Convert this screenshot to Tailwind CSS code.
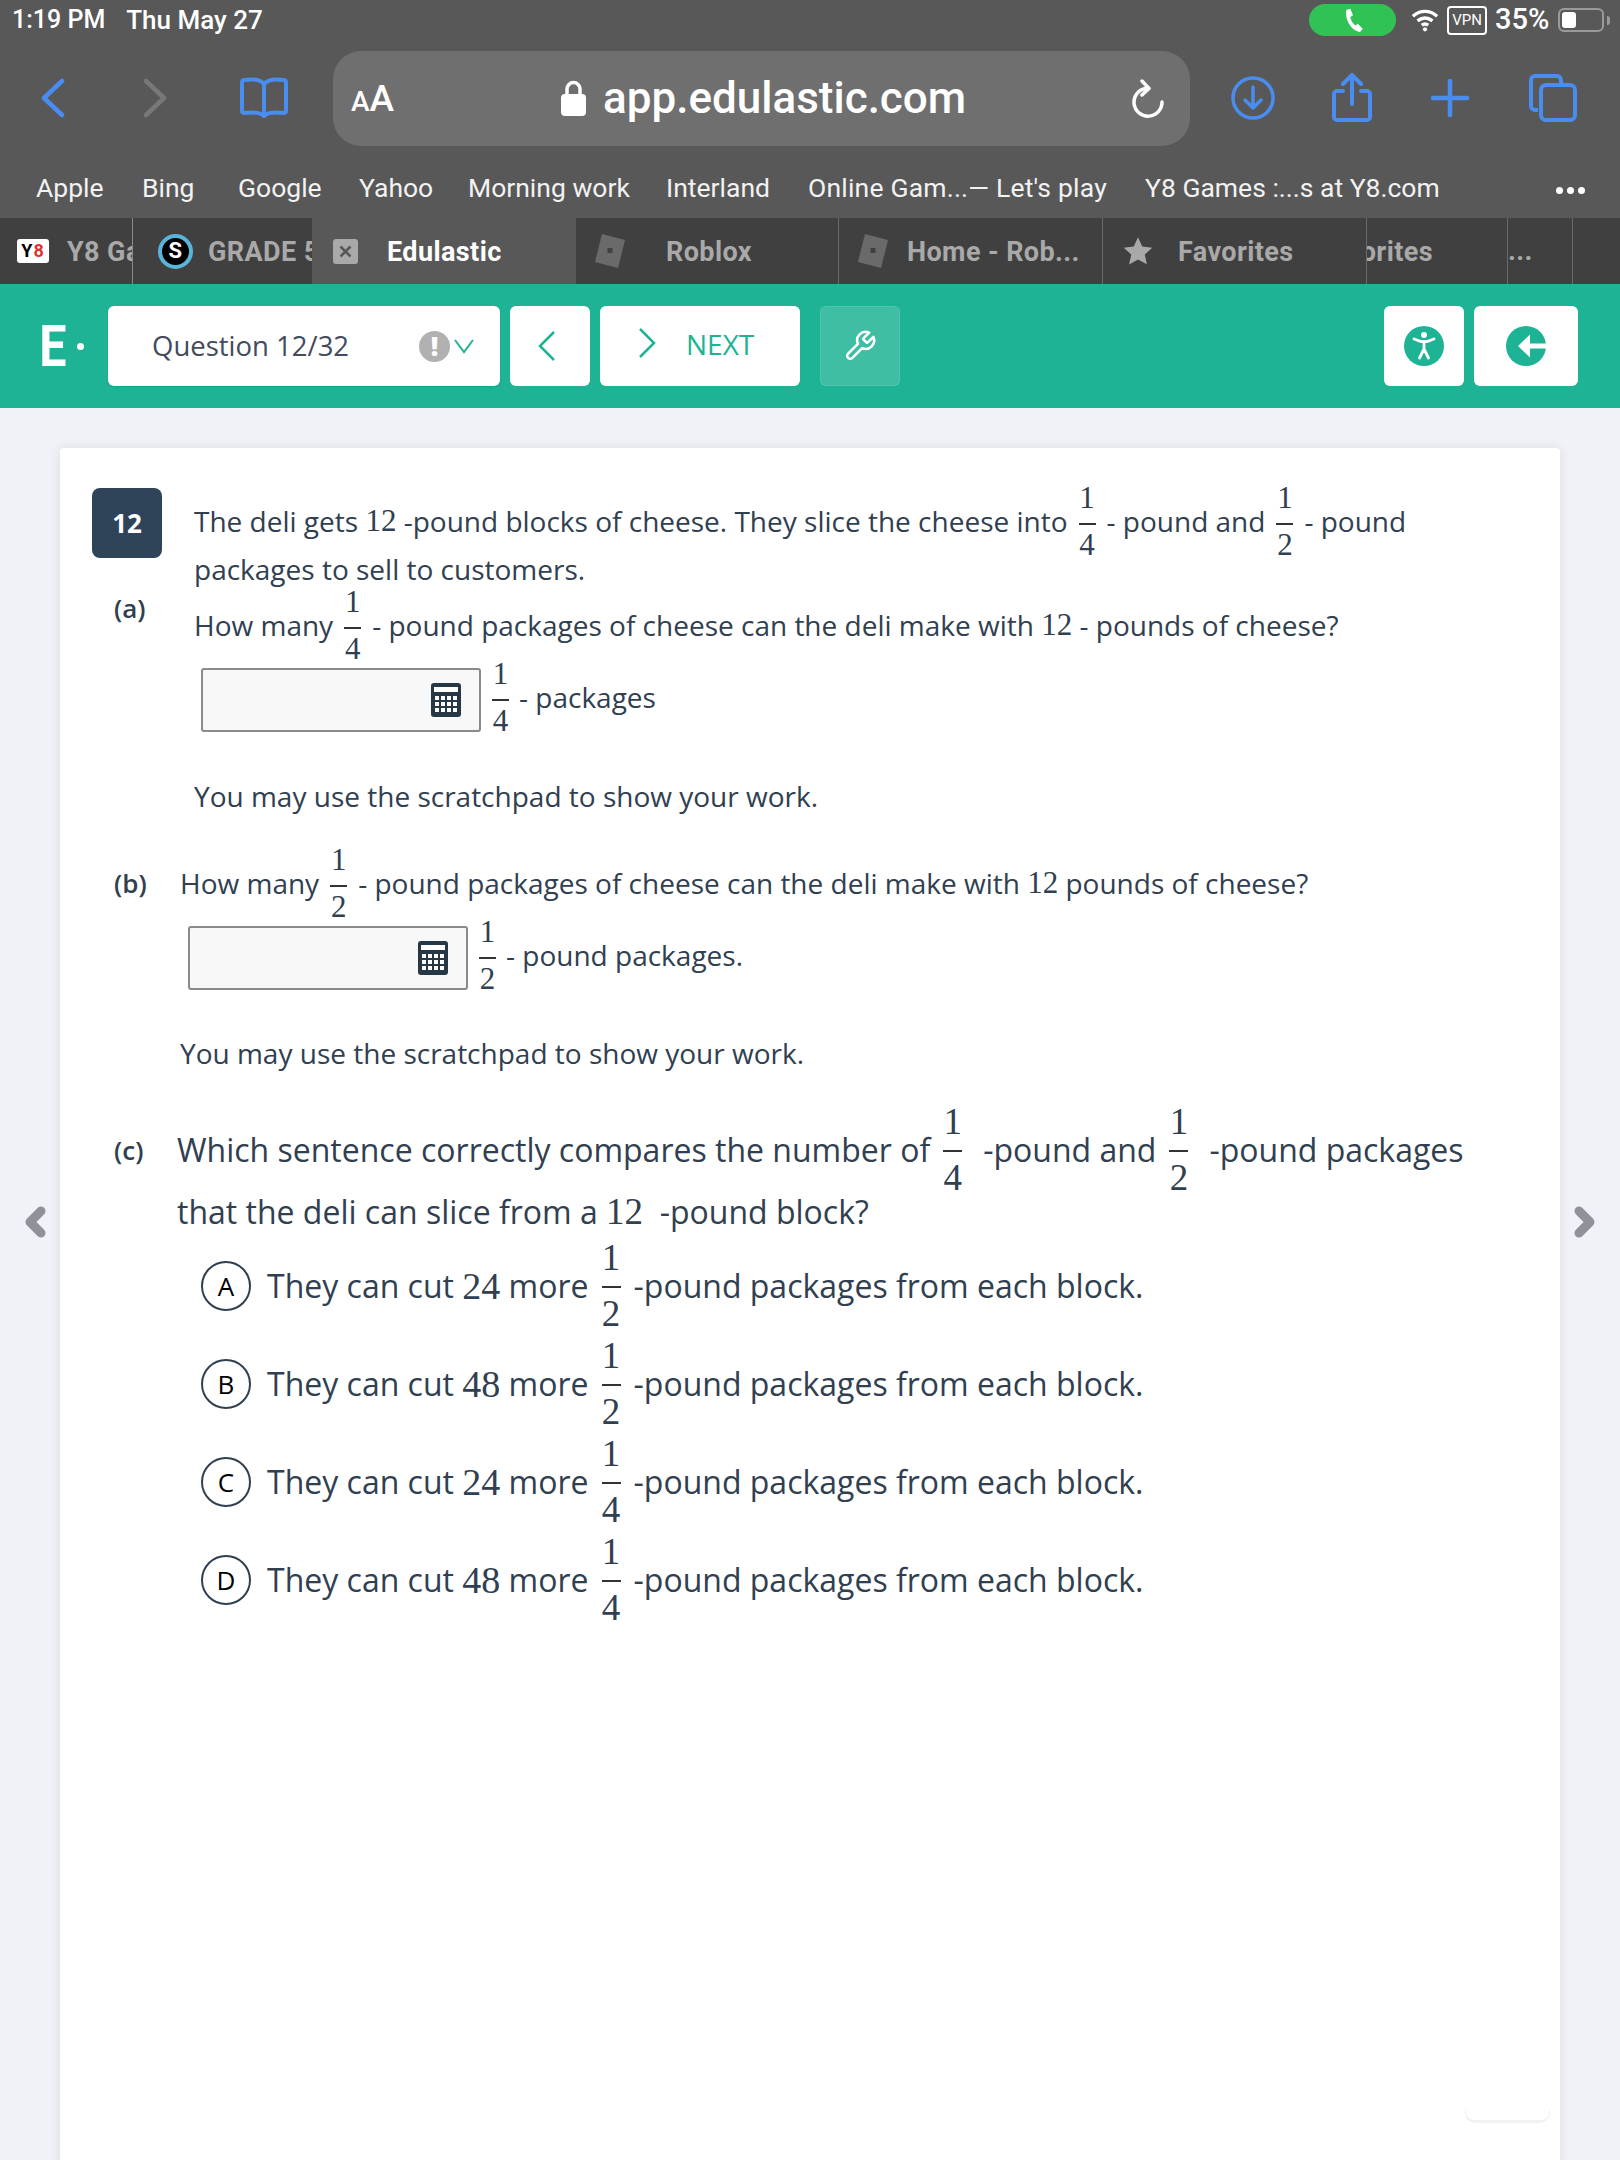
<!DOCTYPE html>
<html lang="en">
<head>
  <meta charset="UTF-8">
  <title>Edulastic</title>
  <script src="https://cdn.jsdelivr.net/npm/@tailwindcss/browser@4"></script>
</head>
<body class="bg-[#f1f2f7] font-['Open_Sans',sans-serif] text-[#304050]">
<div class="w-[1620px] h-[2160px] overflow-hidden relative">

  <!-- Safari status + toolbar -->
  <div class="bg-[#585858] font-['Roboto',sans-serif] text-white">
    <div class="h-[40px] flex items-center pl-[12px] pr-[10px] font-medium">
      <span class="text-[25px]">1:19 PM</span>
      <span class="ml-[21px] text-[26px]">Thu May 27</span>
      <div class="ml-auto flex items-center">
        <div class="w-[87px] h-[32px] rounded-full bg-[#30c254] flex items-center justify-center">
          <svg class="w-[26px] h-[26px]" viewBox="0 0 24 24" fill="#fff"><path d="M6 2.500 9.500 1.500 12 7.500 9.500 9.500C10 12 11.500 15 14 17L16.500 15.500 21 20 18.500 23C11 22 4 12 6 2.500Z"/></svg>
        </div>
        <svg class="w-[28px] h-[30px] ml-[15px]" viewBox="0 0 30 30" fill="none" stroke="#fff" stroke-width="3.600"><path d="M2 11c8-7 18-7 26 0M7 16c5-4 11-4 16 0M11.500 20.500c2-1.500 5-1.500 7 0"/><circle cx="15" cy="25" r="2.200" fill="#fff" stroke="none"/></svg>
        <div class="ml-[8px] w-[40px] h-[29px] border-[2px] border-white rounded-[4px] text-[15px] font-normal leading-none flex items-center justify-center">VPN</div>
        <span class="ml-[8px] w-[58px] text-[29px]">35%</span>
        <div class="ml-[5px] w-[46px] h-[24px] border-[2px] border-[#9a9a9a] rounded-[6px] p-[2px]"><div class="w-[14px] h-full bg-white rounded-[3px]"></div></div>
        <div class="ml-[3px] w-[3px] h-[9px] bg-[#9a9a9a] rounded-r"></div>
      </div>
    </div>

    <div class="h-[120px] pb-[4px] flex items-center relative">
      <svg class="w-[24px] h-[40px] ml-[41px]" viewBox="0 0 24 40" fill="none" stroke="#4a8df0" stroke-width="4.500" stroke-linecap="round" stroke-linejoin="round"><path d="M21 3 3 20l18 17"/></svg>
      <svg class="w-[24px] h-[40px] ml-[78px]" viewBox="0 0 24 40" fill="none" stroke="#787878" stroke-width="4.500" stroke-linecap="round" stroke-linejoin="round"><path d="M3 3l18 17L3 37"/></svg>
      <svg class="w-[50px] h-[42px] ml-[72px]" viewBox="0 0 50 42" fill="none" stroke="#4a8df0" stroke-width="4" stroke-linejoin="round" stroke-linecap="round"><path d="M25 7C21 2 12 2 5 3 3 3 3 5 3 6v28c0 2 1 2 3 2 8-1 15-1 19 3 4-4 11-4 19-3 2 0 3 0 3-2V6c0-1 0-3-2-3-7-1-16-1-20 4ZM25 7v32"/></svg>
      <div class="ml-[44px] w-[857px] h-[95px] rounded-[28px] bg-[#6f6f6f] flex items-center relative">
        <span class="ml-[18px] font-medium leading-none"><span class="text-[28px]">A</span><span class="text-[37px]">A</span></span>
        <div class="absolute left-[228px] top-[25px] flex items-center">
          <svg class="w-[25px] h-[36px]" viewBox="0 0 25 36"><path d="M6 15V9a6.500 6.500 0 0 1 13 0v6" fill="none" stroke="#fff" stroke-width="3.500"/><rect x="0" y="14" width="25" height="22" rx="4" fill="#fff"/></svg>
          <span class="ml-[17px] text-[44px] font-medium leading-none">app.edulastic.com</span>
        </div>
        <svg class="absolute left-[798px] top-[28px] w-[34px] h-[40px]" viewBox="0 0 34 40" fill="none" stroke="#fff" stroke-width="3.500" stroke-linecap="round" stroke-linejoin="round"><path d="M14 9.500a14 14 0 1 0 17 13.500"/><path d="M11 2l7 7.500-7 6.500"/></svg>
      </div>
      <svg class="w-[44px] h-[44px] ml-[41px]" viewBox="0 0 44 44" fill="none" stroke="#4a8df0" stroke-width="3.500" stroke-linecap="round" stroke-linejoin="round"><circle cx="22" cy="22" r="20"/><path d="M22 11v21M14 24l8 8 8-8"/></svg>
      <svg class="w-[42px] h-[50px] ml-[56px]" viewBox="0 0 42 50" fill="none" stroke="#4a8df0" stroke-width="4" stroke-linecap="round" stroke-linejoin="round"><path d="M12 18H6a3 3 0 0 0-3 3v23a3 3 0 0 0 3 3h30a3 3 0 0 0 3-3V21a3 3 0 0 0-3-3h-6M21 31V3M12 11l9-9 9 9"/></svg>
      <svg class="w-[38px] h-[38px] ml-[58px]" viewBox="0 0 38 38" fill="none" stroke="#4a8df0" stroke-width="4.500" stroke-linecap="round"><path d="M19 2v34M2 19h34"/></svg>
      <svg class="w-[48px] h-[48px] ml-[60px]" viewBox="0 0 48 48" fill="none" stroke="#4a8df0" stroke-width="4" stroke-linejoin="round"><path d="M9 36H6a4 4 0 0 1-4-4V6a4 4 0 0 1 4-4h22a4 4 0 0 1 4 4v5"/><rect x="12" y="11" width="34" height="35" rx="5"/></svg>
    </div>

    <!-- Bookmarks -->
    <div class="h-[58px] relative text-[26.500px] text-[#f2f2f2]">
      <span class="absolute left-[36px] top-[8px]">Apple</span>
      <span class="absolute left-[142px] top-[8px]">Bing</span>
      <span class="absolute left-[238px] top-[8px]">Google</span>
      <span class="absolute left-[359px] top-[8px]">Yahoo</span>
      <span class="absolute left-[468px] top-[8px]">Morning work</span>
      <span class="absolute left-[666px] top-[8px]">Interland</span>
      <span class="absolute left-[808px] top-[8px] tracking-[0.2px]">Online Gam...— Let's play</span>
      <span class="absolute left-[1145px] top-[8px]">Y8 Games :...s at Y8.com</span>
      <div class="absolute left-[1556px] top-[27px] flex gap-[4px]">
        <span class="w-[7px] h-[7px] rounded-full bg-white"></span><span class="w-[7px] h-[7px] rounded-full bg-white"></span><span class="w-[7px] h-[7px] rounded-full bg-white"></span>
      </div>
    </div>
  </div>

  <!-- Tabs -->
  <div class="h-[66px] bg-[#404040] flex font-['Roboto',sans-serif] font-bold text-[27px] tracking-[0.4px] text-[#a9a9a9]">
    <div class="w-[133px] border-r border-[#8a8a8a] flex items-center overflow-hidden pl-[17px] shrink-0">
      <div class="w-[32px] h-[24px] shrink-0 bg-white rounded-[3px] flex items-center justify-center text-[18px] leading-none text-black tracking-[1px]">Y<span class="text-[#e03030]">8</span></div>
      <span class="ml-[18px] pt-[2px] whitespace-nowrap">Y8 Games</span>
    </div>
    <div class="w-[179px] flex items-center overflow-hidden pl-[25px] shrink-0">
      <div class="w-[35px] h-[35px] shrink-0 rounded-full bg-black border-[4px] border-[#5ab4d8] flex items-center justify-center text-[22px] text-white leading-none">S</div>
      <span class="ml-[15px] pt-[2px] whitespace-nowrap">GRADE 5</span>
    </div>
    <div class="w-[264px] bg-[#585858] flex items-center pl-[21px] text-white shrink-0">
      <svg class="w-[25px] h-[25px]" viewBox="0 0 25 25"><rect width="25" height="25" rx="3" fill="#a9a9a9"/><path d="M7.500 7.500l10 10M17.500 7.500l-10 10" stroke="#585858" stroke-width="2.500"/></svg>
      <span class="ml-[29px] pt-[2px]">Edulastic</span>
    </div>
    <div class="w-[263px] border-r border-[#6a6a6a] flex items-center pl-[18px] shrink-0">
      <svg class="w-[32px] h-[36px]" viewBox="0 0 32 36"><path d="M8 1 31 7 24 35 1 29Z" fill="#6a6a6a"/><rect x="13.500" y="15" width="5" height="5" fill="#404040"/></svg>
      <span class="ml-[40px] pt-[2px]">Roblox</span>
    </div>
    <div class="w-[264px] border-r border-[#6a6a6a] flex items-center pl-[18px] shrink-0">
      <svg class="w-[32px] h-[36px]" viewBox="0 0 32 36"><path d="M8 1 31 7 24 35 1 29Z" fill="#6a6a6a"/><rect x="13.500" y="15" width="5" height="5" fill="#404040"/></svg>
      <span class="ml-[18px] pt-[2px] whitespace-nowrap">Home - Rob...</span>
    </div>
    <div class="w-[264px] border-r border-[#6a6a6a] flex items-center pl-[20px] shrink-0">
      <svg class="w-[30px] h-[30px]" viewBox="0 0 24 24" fill="#a9a9a9"><path d="M12 1l3.400 7.400 8 .9-6 5.400 1.700 8L12 18.700 4.900 22.700l1.700-8-6-5.400 8-.9Z"/></svg>
      <span class="ml-[25px] pt-[2px]">Favorites</span>
    </div>
    <div class="w-[141px] border-r border-[#6a6a6a] flex items-center justify-end overflow-hidden shrink-0">
      <span class="whitespace-nowrap mr-[74px] pt-[2px]">Favorites</span>
    </div>
    <div class="w-[65px] border-r border-[#6a6a6a] flex items-center shrink-0"><span>...</span></div>
  </div>

  <!-- Edulastic header -->
  <div class="h-[124px] bg-[#1eb394] flex items-center relative">
    <span class="ml-[37px] w-[30px] text-white text-[57px] font-bold leading-none font-['Roboto',sans-serif] scale-x-[0.85]">E</span>
    <span class="ml-[10px] w-[7px] h-[7px] rounded-full bg-white"></span>
    <div class="ml-[24px] w-[392px] h-[80px] bg-white rounded-[6px] shadow-[0_1px_2px_rgba(0,0,0,0.12)] flex items-center pl-[44px] text-[27.500px] text-[#434b5d]">
      <span>Question 12/32</span>
      <span class="ml-[70px] w-[31px] h-[31px] rounded-full bg-[#b1b1b1] text-white text-[26px] font-extrabold flex items-center justify-center leading-none">!</span>
      <svg class="ml-[3px] w-[22px] h-[16px]" viewBox="0 0 22 16" fill="none" stroke="#1eb394" stroke-width="2"><path d="M2 2l9 12 9-12"/></svg>
    </div>
    <div class="ml-[10px] w-[80px] h-[80px] bg-white rounded-[6px] flex items-center justify-center">
      <svg class="w-[18px] h-[32px] mr-[8px]" viewBox="0 0 18 32" fill="none" stroke="#1eb394" stroke-width="2.500"><path d="M17 2 3 16l14 14"/></svg>
    </div>
    <div class="ml-[10px] w-[200px] h-[80px] bg-white rounded-[6px] flex items-center pl-[39px] text-[28px] text-[#1eb394]">
      <svg class="w-[18px] h-[32px] mb-[6px]" viewBox="0 0 18 32" fill="none" stroke="#1eb394" stroke-width="2.500"><path d="M1 2l14 14L1 30"/></svg>
      <span class="ml-[29px] mb-[4px]">NEXT</span>
    </div>
    <div class="ml-[20px] w-[80px] h-[80px] bg-white/15 rounded-[6px] border border-white/10 flex items-center justify-center">
      <svg class="w-[34px] h-[34px]" viewBox="0 0 24 24" fill="none" stroke="#fff" stroke-width="1.800" stroke-linejoin="round" stroke-linecap="round"><path d="M14.700 6.300a1 1 0 0 0 0 1.400l1.600 1.600a1 1 0 0 0 1.400 0l3.770-3.770a6 6 0 0 1-7.940 7.940l-6.910 6.910a2.120 2.120 0 0 1-3-3l6.910-6.910a6 6 0 0 1 7.940-7.940l-3.760 3.760z"/></svg>
    </div>
    <div class="ml-auto w-[80px] h-[80px] bg-white rounded-[6px] flex items-center justify-center">
      <svg class="w-[40px] h-[40px]" viewBox="0 0 40 40"><circle cx="20" cy="20" r="20" fill="#1eb394"/><circle cx="20" cy="9" r="3" fill="#fff"/><path d="M10 13l7 2.500h6l7-2.500M20 16v7M20 23l-4.500 9M20 23l4.500 9" fill="none" stroke="#fff" stroke-width="2.800" stroke-linecap="round"/></svg>
    </div>
    <div class="ml-[10px] mr-[42px] w-[104px] h-[80px] bg-white rounded-[6px] flex items-center justify-center">
      <svg class="w-[40px] h-[40px]" viewBox="0 0 40 40"><circle cx="20" cy="20" r="20" fill="#1eb394"/><path d="M40 17.500v5H24v9L12 20l12-11.500v9Z" fill="#fff"/></svg>
    </div>
  </div>

  <!-- Side arrows -->
  <svg class="absolute left-[24px] top-[1206px] w-[22px] h-[32px]" viewBox="0 0 22 32" fill="none" stroke="#8f9299" stroke-width="9" stroke-linejoin="round" stroke-linecap="round"><path d="M17 5 6 16l11 11"/></svg>
  <svg class="absolute left-[1574px] top-[1206px] w-[22px] h-[32px]" viewBox="0 0 22 32" fill="none" stroke="#8f9299" stroke-width="9" stroke-linejoin="round" stroke-linecap="round"><path d="M5 5l11 11L5 27"/></svg>

  <!-- Question card -->
  <div class="ml-[60px] mt-[40px] w-[1500px] h-[1800px] bg-white rounded-[4px] shadow-[0_0_12px_rgba(0,0,0,0.09)] pt-[40px] pl-[32px] text-[28px] relative">

    <div class="flex">
      <div class="w-[70px] h-[70px] rounded-[8px] bg-[#2f4458] text-white text-[26px] font-bold flex items-center justify-center">12</div>
      <div class="ml-[32px] pt-[10px]">
        <div class="h-[48px] pb-[2px] flex items-center whitespace-nowrap">
          The deli gets&nbsp;<span class="font-['Liberation_Serif',serif] text-[31px]">12</span>&nbsp;-pound blocks of cheese. They slice the cheese into
          <span class="inline-flex flex-col items-center font-['Liberation_Serif',serif] text-[31px] leading-[34px] mx-[11px]"><span class="mb-[8px]">1</span><span class="w-[17px] h-[2px] bg-[#333]"></span><span class="mt-[3px]">4</span></span>
          - pound and
          <span class="inline-flex flex-col items-center font-['Liberation_Serif',serif] text-[31px] leading-[34px] mx-[11px]"><span class="mb-[8px]">1</span><span class="w-[17px] h-[2px] bg-[#333]"></span><span class="mt-[3px]">2</span></span>
          - pound
        </div>
        <div class="h-[48px] pb-[2px] flex items-center">packages to sell to customers.</div>
      </div>
    </div>

    <!-- part a -->
    <div class="flex">
      <div class="w-[102px] pl-[22px] -mt-[5px] font-semibold text-[26px]">(a)</div>
      <div>
        <div class="h-[64px] pb-[2px] flex items-center whitespace-nowrap">
          How many
          <span class="inline-flex flex-col items-center font-['Liberation_Serif',serif] text-[31px] leading-[34px] mx-[11px]"><span class="mb-[8px]">1</span><span class="w-[17px] h-[2px] bg-[#333]"></span><span class="mt-[3px]">4</span></span>
          - pound packages of cheese can the deli make with&nbsp;<span class="font-['Liberation_Serif',serif] text-[31px]">12</span>&nbsp;- pounds of cheese?
        </div>
        <div class="mt-[10px] ml-[7px] flex items-center h-[64px]">
          <div class="w-[280px] h-[64px] bg-[#f8f8f8] border-2 border-[#8a8a8a] rounded-[3px] flex items-center justify-end pr-[18px]">
            <svg class="w-[30px] h-[34px]" viewBox="0 0 30 34"><rect width="30" height="34" rx="3" fill="#263746"/><rect x="3" y="4" width="24" height="5" fill="#fff"/><g fill="#fff"><rect x="4" y="13" width="4" height="4"/><rect x="10" y="13" width="4" height="4"/><rect x="16" y="13" width="4" height="4"/><rect x="22" y="13" width="4" height="4"/><rect x="4" y="19" width="4" height="4"/><rect x="10" y="19" width="4" height="4"/><rect x="16" y="19" width="4" height="4"/><rect x="22" y="19" width="4" height="4"/><rect x="4" y="25" width="4" height="4"/><rect x="10" y="25" width="4" height="4"/><rect x="16" y="25" width="4" height="4"/><rect x="22" y="25" width="4" height="4"/></g></svg>
          </div>
          <span class="inline-flex flex-col items-center font-['Liberation_Serif',serif] text-[31px] leading-[34px] ml-[11px] mr-[10px] mb-[6px]"><span class="mb-[8px]">1</span><span class="w-[17px] h-[2px] bg-[#333]"></span><span class="mt-[3px]">4</span></span>
          <span class="mb-[6px]">- packages</span>
        </div>
        <div class="mt-[44px] h-[40px] flex items-center">You may use the scratchpad to show your work.</div>
      </div>
    </div>

    <!-- part b -->
    <div class="mt-[36px] h-[64px] pb-[2px] flex items-center whitespace-nowrap">
      <div class="w-[88px] pl-[22px] font-semibold text-[26px]">(b)</div>
      How many
      <span class="inline-flex flex-col items-center font-['Liberation_Serif',serif] text-[31px] leading-[34px] mx-[11px]"><span class="mb-[8px]">1</span><span class="w-[17px] h-[2px] bg-[#333]"></span><span class="mt-[3px]">2</span></span>
      - pound packages of cheese can the deli make with&nbsp;<span class="font-['Liberation_Serif',serif] text-[31px]">12</span>&nbsp;pounds of cheese?
    </div>
    <div class="mt-[10px] ml-[96px] flex items-center h-[64px]">
      <div class="w-[280px] h-[64px] bg-[#f8f8f8] border-2 border-[#8a8a8a] rounded-[3px] flex items-center justify-end pr-[18px]">
        <svg class="w-[30px] h-[34px]" viewBox="0 0 30 34"><rect width="30" height="34" rx="3" fill="#263746"/><rect x="3" y="4" width="24" height="5" fill="#fff"/><g fill="#fff"><rect x="4" y="13" width="4" height="4"/><rect x="10" y="13" width="4" height="4"/><rect x="16" y="13" width="4" height="4"/><rect x="22" y="13" width="4" height="4"/><rect x="4" y="19" width="4" height="4"/><rect x="10" y="19" width="4" height="4"/><rect x="16" y="19" width="4" height="4"/><rect x="22" y="19" width="4" height="4"/><rect x="4" y="25" width="4" height="4"/><rect x="10" y="25" width="4" height="4"/><rect x="16" y="25" width="4" height="4"/><rect x="22" y="25" width="4" height="4"/></g></svg>
      </div>
      <span class="inline-flex flex-col items-center font-['Liberation_Serif',serif] text-[31px] leading-[34px] ml-[11px] mr-[10px] mb-[6px]"><span class="mb-[8px]">1</span><span class="w-[17px] h-[2px] bg-[#333]"></span><span class="mt-[3px]">2</span></span>
      <span class="mb-[6px]">- pound packages.</span>
    </div>
    <div class="mt-[44px] ml-[88px] h-[40px] pb-[2px] flex items-center">You may use the scratchpad to show your work.</div>

    <!-- part c -->
    <div class="mt-[44px] h-[64px] flex items-center whitespace-nowrap text-[32px]">
      <div class="w-[85px] pl-[22px] font-semibold text-[26px]">(c)</div>
      Which sentence correctly compares the number of
      <span class="inline-flex flex-col items-center font-['Liberation_Serif',serif] text-[37px] leading-[38px] ml-[13px] mr-[21px]"><span class="mb-[9px]">1</span><span class="w-[19px] h-[2px] bg-[#333]"></span><span class="mt-[7px]">4</span></span>
      -pound and
      <span class="inline-flex flex-col items-center font-['Liberation_Serif',serif] text-[37px] leading-[38px] ml-[13px] mr-[21px]"><span class="mb-[9px]">1</span><span class="w-[19px] h-[2px] bg-[#333]"></span><span class="mt-[7px]">2</span></span>
      -pound packages
    </div>
    <div class="mt-[10px] ml-[85px] h-[40px] flex items-center text-[32px] whitespace-nowrap">
      that the deli can slice from a&nbsp;<span class="font-['Liberation_Serif',serif] text-[37px]">12</span>&nbsp;&nbsp;-pound block?
    </div>

    <div class="mt-[5px] ml-[109px] text-[32px]">
      <div class="h-[98px] flex items-center whitespace-nowrap">
        <div class="w-[50px] h-[50px] rounded-full border-2 border-[#304050] text-black text-[26px] flex items-center justify-center mr-[16px]">A</div>
        They can cut&nbsp;<span class="font-['Liberation_Serif',serif] text-[38px]">24</span>&nbsp;more
        <span class="inline-flex flex-col items-center font-['Liberation_Serif',serif] text-[37px] leading-[38px] mx-[13px]"><span class="mb-[9px]">1</span><span class="w-[19px] h-[2px] bg-[#333]"></span><span class="mt-[7px]">2</span></span>
        -pound packages from each block.
      </div>
      <div class="h-[98px] flex items-center whitespace-nowrap">
        <div class="w-[50px] h-[50px] rounded-full border-2 border-[#304050] text-black text-[26px] flex items-center justify-center mr-[16px]">B</div>
        They can cut&nbsp;<span class="font-['Liberation_Serif',serif] text-[38px]">48</span>&nbsp;more
        <span class="inline-flex flex-col items-center font-['Liberation_Serif',serif] text-[37px] leading-[38px] mx-[13px]"><span class="mb-[9px]">1</span><span class="w-[19px] h-[2px] bg-[#333]"></span><span class="mt-[7px]">2</span></span>
        -pound packages from each block.
      </div>
      <div class="h-[98px] flex items-center whitespace-nowrap">
        <div class="w-[50px] h-[50px] rounded-full border-2 border-[#304050] text-black text-[26px] flex items-center justify-center mr-[16px]">C</div>
        They can cut&nbsp;<span class="font-['Liberation_Serif',serif] text-[38px]">24</span>&nbsp;more
        <span class="inline-flex flex-col items-center font-['Liberation_Serif',serif] text-[37px] leading-[38px] mx-[13px]"><span class="mb-[9px]">1</span><span class="w-[19px] h-[2px] bg-[#333]"></span><span class="mt-[7px]">4</span></span>
        -pound packages from each block.
      </div>
      <div class="h-[98px] flex items-center whitespace-nowrap">
        <div class="w-[50px] h-[50px] rounded-full border-2 border-[#304050] text-black text-[26px] flex items-center justify-center mr-[16px]">D</div>
        They can cut&nbsp;<span class="font-['Liberation_Serif',serif] text-[38px]">48</span>&nbsp;more
        <span class="inline-flex flex-col items-center font-['Liberation_Serif',serif] text-[37px] leading-[38px] mx-[13px]"><span class="mb-[9px]">1</span><span class="w-[19px] h-[2px] bg-[#333]"></span><span class="mt-[7px]">4</span></span>
        -pound packages from each block.
      </div>
    </div>

    <!-- faint floating tab at the card's lower right -->
    <div class="absolute left-[1405px] top-[1662px] w-[85px] h-[13px] border-b-[3px] border-x border-[#f2f2f2] rounded-b-[10px]"></div>
  </div>
</div>
</body>
</html>
